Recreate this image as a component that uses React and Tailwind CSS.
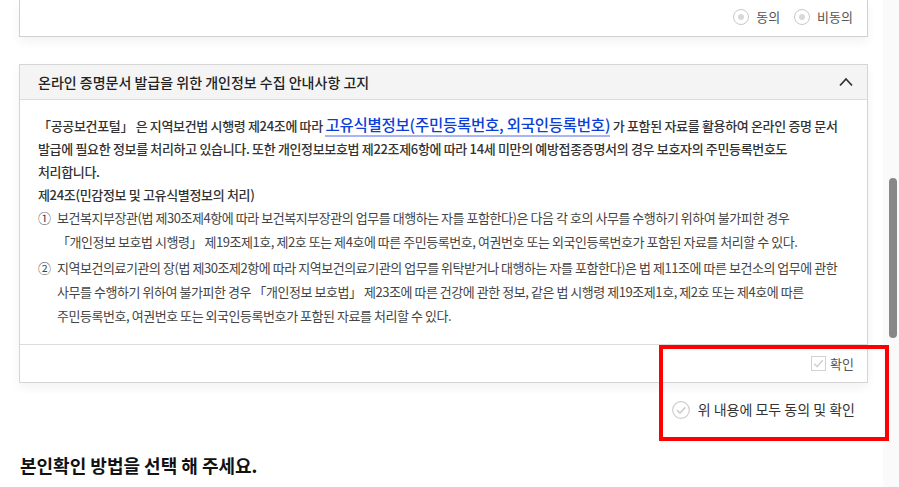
import React from 'react'

const FONT = { fontFamily: '"Noto Sans CJK KR", "Noto Sans", sans-serif' }

function Radio({ label }) {
  return (
    <label className="flex items-center gap-[7px] text-[13px] text-[#555]">
      <span className="flex h-[16px] w-[16px] items-center justify-center rounded-full border border-[#c8c8c8] bg-white">
        <span className="h-[6px] w-[6px] rounded-full bg-[#d8d8d8]" />
      </span>
      {label}
    </label>
  )
}

function Check() {
  return (
    <svg viewBox="0 0 16 16" className="h-[15px] w-[15px]" aria-hidden>
      <rect x="0.5" y="0.5" width="15" height="15" fill="#fff" stroke="#cfcfcf" />
      <path d="M3.5 8.2 L6.6 11.2 L12.6 4.6" fill="none" stroke="#cfcfcf" strokeWidth="1.6" />
    </svg>
  )
}

function CircleCheck() {
  return (
    <svg viewBox="0 0 18 18" className="h-[18px] w-[18px]" aria-hidden>
      <circle cx="9" cy="9" r="8.3" fill="#fff" stroke="#cdcdcd" strokeWidth="1.2" />
      <path d="M5 9.2 L8 12 L13.2 6.4" fill="none" stroke="#cdcdcd" strokeWidth="1.6" />
    </svg>
  )
}

export default function App() {
  return (
    <div className="relative flex h-[487px] w-[899px] overflow-hidden bg-white text-[#333]" style={FONT}>
      <main className="flex-1 pl-[19px] pr-[15px]">
        {/* previous agreement card, cut off at top */}
        <section className="flex h-[37px] items-center justify-end gap-[14px] border-x border-b border-[#d0d0d0] bg-white pb-[3px] pr-[14px] shadow-[0_5px_10px_rgba(0,0,0,0.05)]">
          <Radio label="동의" />
          <Radio label="비동의" />
        </section>

        <section className="mt-[27px] border border-[#d5d5d5] bg-white shadow-[0_5px_10px_rgba(0,0,0,0.05)]">
          <header className="flex h-[35px] items-center justify-between border-b border-[#dcdcdc] bg-[#f4f4f4] pl-[18px] pr-[14px]">
            <h2 className="text-[14px] font-medium text-[#222]">온라인 증명문서 발급을 위한 개인정보 수집 안내사항 고지</h2>
            <svg viewBox="0 0 14 10" className="h-[10px] w-[14px]" aria-hidden>
              <path d="M1 8.5 L7 2 L13 8.5" fill="none" stroke="#333" strokeWidth="1.8" />
            </svg>
          </header>

          <div className="border-b border-[#dcdcdc] pb-[16px] pl-[18px] pt-[12px] text-[13px] tracking-[-0.035em]">
            <div className="font-medium tracking-[-0.026em]">
              <div className="h-[25px] whitespace-nowrap leading-[25px]">
                「공공보건포털」 은 지역보건법 시행령 제24조에 따라{' '}
                <span className="border-b-2 border-[#aab4f2] text-[15.5px] tracking-[-0.015em] text-[#0d3fd8]">고유식별정보(주민등록번호, 외국인등록번호)</span>{' '}
                가 포함된 자료를 활용하여 온라인 증명 문서
              </div>
              <div className="whitespace-nowrap leading-[23px]">
                발급에 필요한 정보를 처리하고 있습니다. 또한 개인정보보호법 제22조제6항에 따라 14세 미만의 예방접종증명서의 경우 보호자의 주민등록번호도
              </div>
              <div className="leading-[23px]">처리합니다.</div>
              <div className="leading-[23px]">제24조(민감정보 및 고유식별정보의 처리)</div>
            </div>
            <ol className="text-[#444]">
              <li className="flex leading-[24px]">
                <span className="w-[19px] shrink-0">①</span>
                <div className="whitespace-nowrap">
                  <div>보건복지부장관(법 제30조제4항에 따라 보건복지부장관의 업무를 대행하는 자를 포함한다)은 다음 각 호의 사무를 수행하기 위하여 불가피한 경우</div>
                  <div>「개인정보 보호법 시행령」 제19조제1호, 제2호 또는 제4호에 따른 주민등록번호, 여권번호 또는 외국인등록번호가 포함된 자료를 처리할 수 있다.</div>
                </div>
              </li>
              <li className="mt-[2px] flex leading-[24px]">
                <span className="w-[19px] shrink-0">②</span>
                <div className="whitespace-nowrap">
                  <div>지역보건의료기관의 장(법 제30조제2항에 따라 지역보건의료기관의 업무를 위탁받거나 대행하는 자를 포함한다)은 법 제11조에 따른 보건소의 업무에 관한</div>
                  <div>사무를 수행하기 위하여 불가피한 경우 「개인정보 보호법」 제23조에 따른 건강에 관한 정보, 같은 법 시행령 제19조제1호, 제2호 또는 제4호에 따른</div>
                  <div>주민등록번호, 여권번호 또는 외국인등록번호가 포함된 자료를 처리할 수 있다.</div>
                </div>
              </li>
            </ol>
          </div>

          <div className="flex h-[37px] items-center justify-end gap-[4px] pr-[13px] text-[13px] text-[#555]">
            <Check />
            <span>확인</span>
          </div>
        </section>

        <div className="mt-[16px] flex items-center justify-end gap-[8px] pr-[13px] text-[14px] text-[#333]">
          <CircleCheck />
          <span>위 내용에 모두 동의 및 확인</span>
        </div>

        <h2 className="mt-[32px] pl-px text-[18px] font-bold text-[#111]">본인확인 방법을 선택 해 주세요.</h2>
      </main>

      {/* scrollbar */}
      <div className="w-[16px] shrink-0 bg-[#fafafa] pl-[6px] pt-[178px]">
        <div className="h-[160px] w-[8px] rounded-full bg-[#888]" />
      </div>

      {/* highlight box */}
      <div className="pointer-events-none absolute left-[659px] top-[345px] h-[96px] w-[230px] border-4 border-[#ff0000]" />
    </div>
  )
}
